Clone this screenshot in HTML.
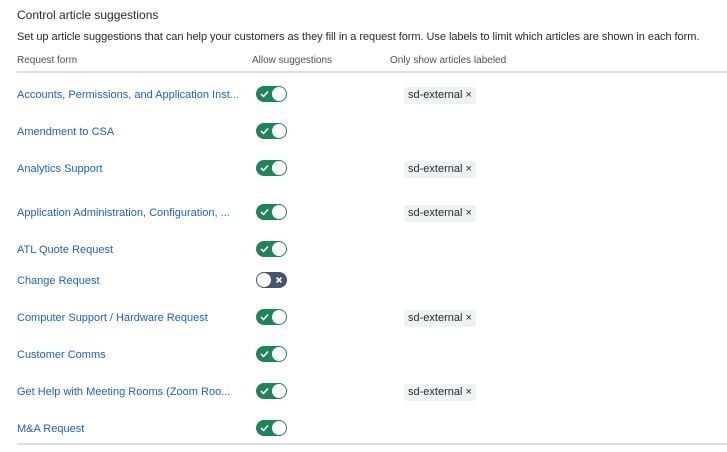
<!DOCTYPE html>
<html><head><style>
body{margin:0;width:727px;height:452px;background:#fff;font-family:"Liberation Sans",sans-serif;position:relative;overflow:hidden;color:#172b4d}
.a{position:absolute;white-space:nowrap}
.t{left:17px;top:8px;font-size:12px;color:#292a2e}
.d{left:17px;top:31px;font-size:11px;color:#292a2e;letter-spacing:-0.05px}
.h{top:55px;font-size:10px;color:#505258}
.l{left:17px;font-size:11px;color:#1d5fd6;margin-top:2px}
.tg{position:absolute;left:256px;width:31px;height:16px;border-radius:8px;background:#1f845a}
.tg::after{content:"";position:absolute;right:1px;top:1px;width:14px;height:14px;border-radius:50%;background:#fff}
.tg svg{position:absolute;left:4px;top:4px}
.off{background:#44546f}
.off::after{left:1px;right:auto}
.off svg{left:19px}
.tag{position:absolute;left:404px;height:17px;line-height:17px;padding:0 4px;background:#f0f1f2;border-radius:3px;font-size:11px;color:#292a2e;margin-top:1px}
.line{position:absolute;left:17px;right:0;height:1px;background:#dcdfe4}
</style></head><body>
<div class="a t">Control article suggestions</div>
<div class="a d">Set up article suggestions that can help your customers as they fill in a request form. Use labels to limit which articles are shown in each form.</div>
<div class="a h" style="left:17px">Request form</div>
<div class="a h" style="left:252px">Allow suggestions</div>
<div class="a h" style="left:390px">Only show articles labeled</div>
<div class="line" style="top:71px;height:2px"></div>
<div class="line" style="top:443px;height:2px"></div>

<div class="a l" style="top:87px">Accounts, Permissions, and Application Inst...</div>
<div class="tg" style="top:86px"><svg width="9" height="8"><path d="M1 4l2.5 2.5L8 1.5" stroke="#fff" stroke-width="1.6" fill="none"/></svg></div>
<div class="tag" style="top:86px">sd-external ×</div>

<div class="a l" style="top:124px">Amendment to CSA</div>
<div class="tg" style="top:123px"><svg width="9" height="8"><path d="M1 4l2.5 2.5L8 1.5" stroke="#fff" stroke-width="1.6" fill="none"/></svg></div>

<div class="a l" style="top:161px">Analytics Support</div>
<div class="tg" style="top:160px"><svg width="9" height="8"><path d="M1 4l2.5 2.5L8 1.5" stroke="#fff" stroke-width="1.6" fill="none"/></svg></div>
<div class="tag" style="top:160px">sd-external ×</div>

<div class="a l" style="top:205px">Application Administration, Configuration, ...</div>
<div class="tg" style="top:204px"><svg width="9" height="8"><path d="M1 4l2.5 2.5L8 1.5" stroke="#fff" stroke-width="1.6" fill="none"/></svg></div>
<div class="tag" style="top:204px">sd-external ×</div>

<div class="a l" style="top:242px">ATL Quote Request</div>
<div class="tg" style="top:241px"><svg width="9" height="8"><path d="M1 4l2.5 2.5L8 1.5" stroke="#fff" stroke-width="1.6" fill="none"/></svg></div>

<div class="a l" style="top:273px">Change Request</div>
<div class="tg off" style="top:272px"><svg width="8" height="8"><path d="M1.5 1.5l5 5M6.5 1.5l-5 5" stroke="#fff" stroke-width="1.6"/></svg></div>

<div class="a l" style="top:310px">Computer Support / Hardware Request</div>
<div class="tg" style="top:309px"><svg width="9" height="8"><path d="M1 4l2.5 2.5L8 1.5" stroke="#fff" stroke-width="1.6" fill="none"/></svg></div>
<div class="tag" style="top:309px">sd-external ×</div>

<div class="a l" style="top:347px">Customer Comms</div>
<div class="tg" style="top:346px"><svg width="9" height="8"><path d="M1 4l2.5 2.5L8 1.5" stroke="#fff" stroke-width="1.6" fill="none"/></svg></div>

<div class="a l" style="top:384px">Get Help with Meeting Rooms (Zoom Roo...</div>
<div class="tg" style="top:383px"><svg width="9" height="8"><path d="M1 4l2.5 2.5L8 1.5" stroke="#fff" stroke-width="1.6" fill="none"/></svg></div>
<div class="tag" style="top:383px">sd-external ×</div>

<div class="a l" style="top:421px">M&amp;A Request</div>
<div class="tg" style="top:420px"><svg width="9" height="8"><path d="M1 4l2.5 2.5L8 1.5" stroke="#fff" stroke-width="1.6" fill="none"/></svg></div>
</body></html>
